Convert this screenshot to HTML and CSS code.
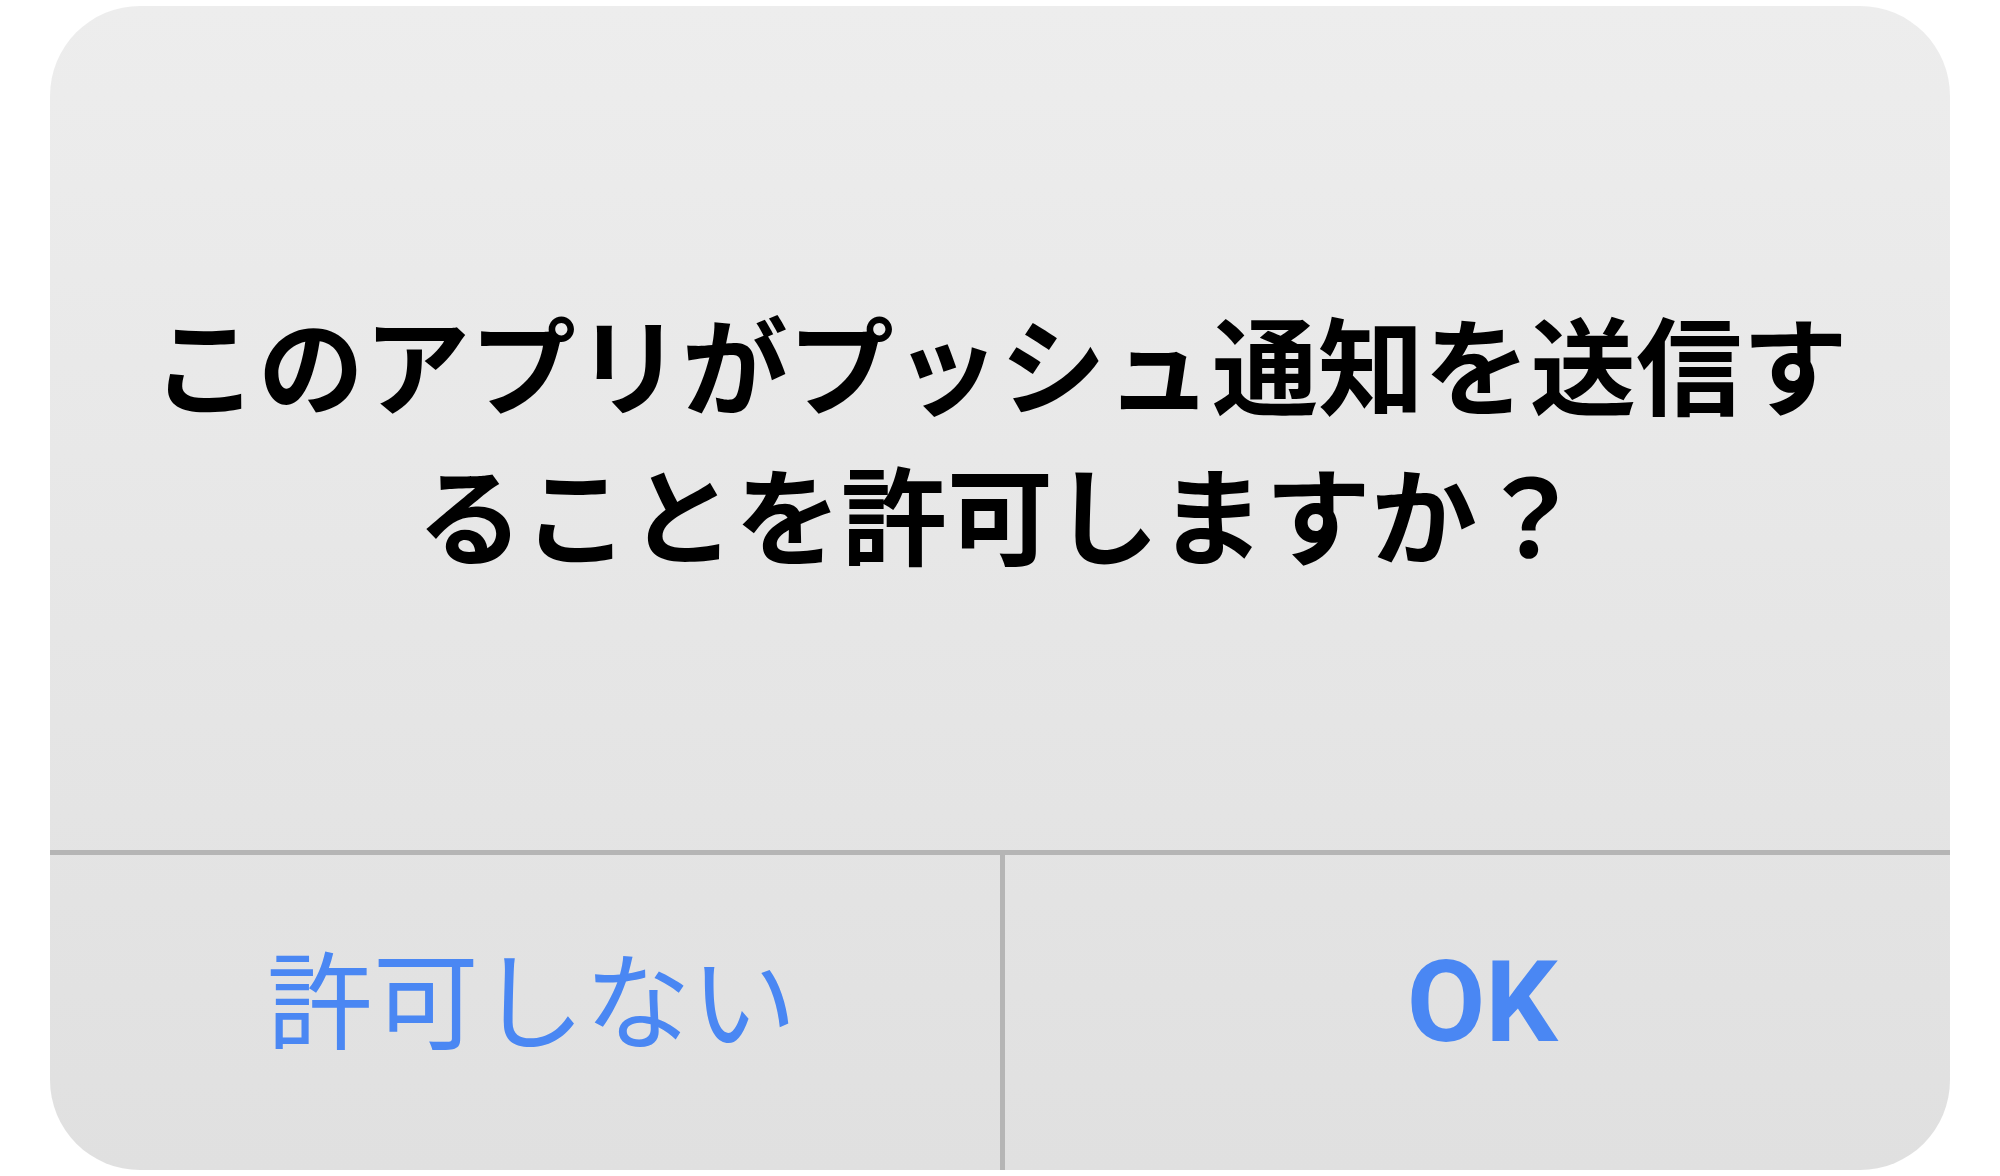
FILE: index.html
```html
<html>
  <head>
    <meta charset="utf-8">
    <title>プッシュ通知</title>
    <link rel="stylesheet" href="styles.css">
  </head>
  <body>
    <div class="alert">
      <div class="message">このアプリがプッシュ通知を送信することを許可しますか？</div>
      <div class="buttons">
        <div class="button deny">許可しない</div>
        <div class="button ok">OK</div>
      </div>
    </div>
  </body>
</html>
```

FILE: styles.css
```css
body {
  margin: 0;
  background: #ffffff;
}

.alert {
  margin: 6px 50px;
  width: 1900px;
  height: 1164px;
  border-radius: 90px;
  overflow: hidden;
  display: flex;
  flex-direction: column;
  background: linear-gradient(#ededed, #e0e0e0);
}

.message {
  flex: 1;
  display: flex;
  align-items: center;
  justify-content: center;
  padding: 16px 80px 0 80px;
  text-align: center;
  font-family: "Noto Sans CJK JP", sans-serif;
  font-weight: bold;
  font-size: 106px;
  line-height: 150px;
  color: #000000;
  border-bottom: 5px solid #b5b5b5;
}

.buttons {
  height: 315px;
  display: flex;
}

.button {
  flex: 1;
  display: flex;
  align-items: center;
  justify-content: center;
  color: #4a87f3;
  padding-bottom: 24px;
}

.deny {
  font-family: "Noto Sans CJK JP", sans-serif;
  font-weight: normal;
  font-size: 106px;
  padding-left: 14px;
  padding-bottom: 36px;
  border-right: 5px solid #b5b5b5;
}

.ok {
  font-family: Roboto, "Liberation Sans", sans-serif;
  font-weight: bold;
  font-size: 114px;
  padding-bottom: 22px;
  padding-left: 10px;
}
```
